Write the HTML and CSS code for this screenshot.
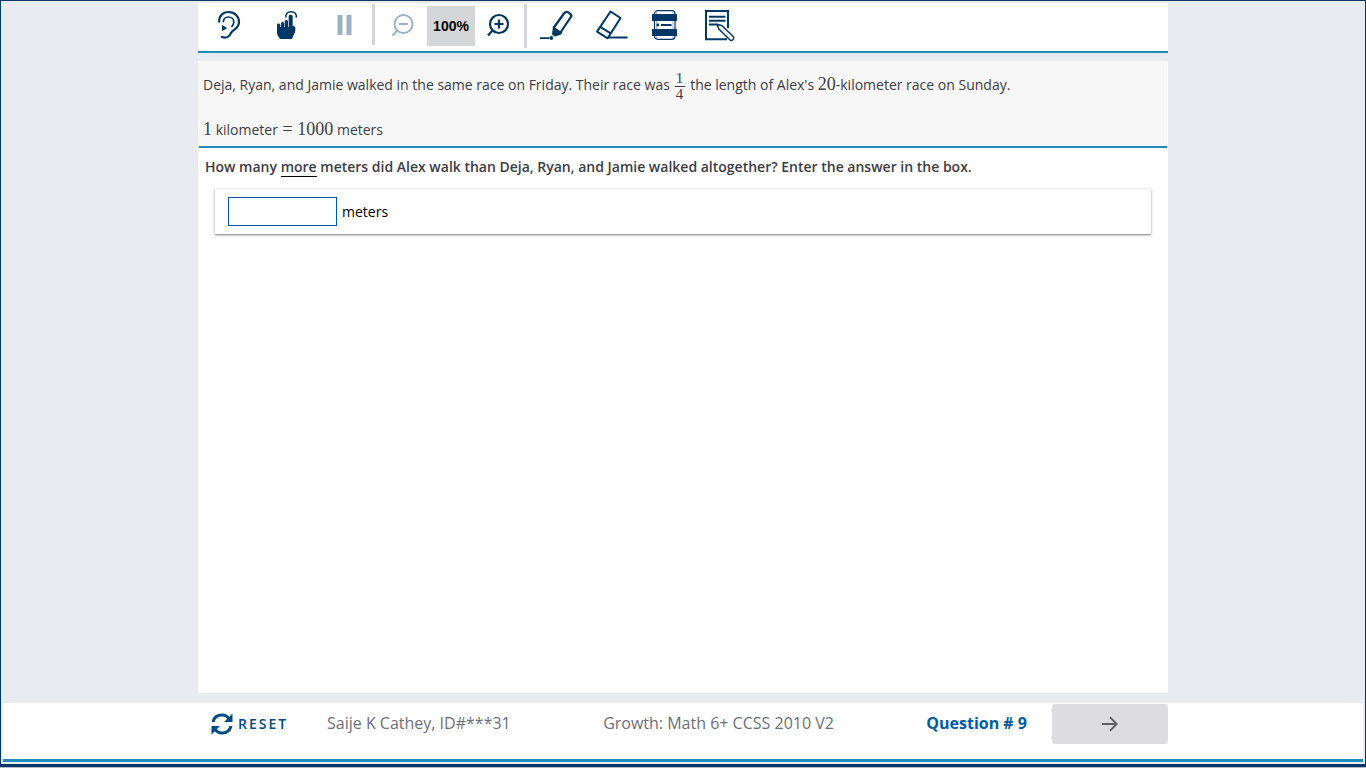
FILE: index.html
```
<!DOCTYPE html>
<html lang="en">
<head>
<meta charset="utf-8">
<title>Growth: Math 6+ CCSS 2010 V2</title>
<link rel="stylesheet" href="styles.css">
</head>
<body>
<div class="app">
  <header class="toolbar">
    <button class="tool" aria-label="Read aloud">
      <svg class="icon" viewBox="0 0 32 32"><g fill="none" stroke="currentColor" stroke-width="2.2"><path d="M6.2 13.5C5.600 7 10 3 15.600 3 21.800 3 26 7.500 26 13c0 7-5.500 6.500-8 11-2 4-4.500 5.800-10 3.800"/><path stroke-width="1.700" d="M10.300 13.300C10.300 10 12.500 8 15.300 8c3.200 0 5.500 2.300 5.500 5 0 2.500-1 3.500-2.300 5"/></g><path fill="currentColor" d="M9 16l5.200 3L9 22.300z"/></svg>
    </button>
    <button class="tool" aria-label="Touch">
      <svg class="icon" viewBox="0 0 32 32"><path fill="currentColor" d="M6 16c0-2 3.300-2 3.300 0v2h.7v-3.500c0-2 3.200-2 3.200 0V18h.6v-5.500c0-2 3.200-2 3.200 0V18h.7V7.500c0-2.400 4-2.400 4 0V17c1.600-.3 2.700.7 2.700 2 0 4-.7 5.500-2 7.500l-.7 2q-.3 1.500-1.500 1.500H9.500q-1 0-1.300-1.500C6.500 26.500 6 25.500 6 23.500z"/><path fill="none" stroke="currentColor" stroke-width="1.500" d="M15 8.500C14.300 5 16.500 2.700 20 2.700s6 2.300 5.300 6"/></svg>
    </button>
    <button class="tool pause" aria-label="Pause" disabled>
      <svg class="icon" viewBox="0 0 32 32"><path fill="currentColor" d="M9.500 6h5v20h-5zM18.500 6h5v20h-5z"/></svg>
    </button>
    <span class="divider"></span>
    <button class="tool zoom-out" aria-label="Zoom out" disabled>
      <svg class="icon" viewBox="0 0 32 32"><g fill="none" stroke="currentColor" stroke-width="2"><circle cx="18.500" cy="15" r="9"/><path d="M14 15h9M12 21.500L7.500 26.500"/></g></svg>
    </button>
    <output class="zoom-level">100%</output>
    <button class="tool zoom-in" aria-label="Zoom in">
      <svg class="icon" viewBox="0 0 32 32"><g fill="none" stroke="currentColor" stroke-width="2.200"><circle cx="16" cy="15" r="9"/><path d="M11.500 15h9M16 10.500v9M9.500 21.500L5 26.500"/></g></svg>
    </button>
    <span class="divider tall"></span>
    <div class="annotate">
      <button class="tool" aria-label="Highlighter">
        <svg class="icon" viewBox="0 0 32 32"><path fill="none" stroke="currentColor" stroke-width="2.200" d="M13.500 19L24 4.500Q26 2 28.300 3.300L30.300 4.800Q32 6.200 30.800 8L20.500 23.500"/><path fill="currentColor" d="M13 17L22.500 23.700 20.500 25.700 15 27.500 12 25.500zM0 28.200h9.200v1.800H0z"/><circle cx="11.300" cy="29" r="1.900" fill="currentColor"/></svg>
      </button>
      <button class="tool" aria-label="Eraser">
        <svg class="icon" viewBox="0 0 32 32"><path fill="none" stroke="currentColor" stroke-width="2" stroke-linejoin="round" d="M16.500 2.500L26.500 9 13.700 29.300 3 22.600zM6.200 17.800L16.800 24.300M14 28.500H33.500"/></svg>
      </button>
      <button class="tool" aria-label="Line reader">
        <svg class="icon" viewBox="0 0 32 32"><rect x="6.500" y="1.700" width="20.500" height="28.600" rx="3" fill="none" stroke="currentColor" stroke-width="1.200"/><path fill="none" stroke="currentColor" stroke-opacity=".35" d="M8.500 3v26M25 3v26"/><rect x="4" y="5" width="25" height="7" rx=".6" fill="currentColor"/><rect x="4" y="20" width="25" height="7" rx=".6" fill="currentColor"/><circle cx="9.800" cy="16" r="1.400" fill="currentColor"/><path stroke="currentColor" stroke-width="2" d="M13 16h10.500"/></svg>
      </button>
      <button class="tool" aria-label="Notepad">
        <svg class="icon" viewBox="0 0 32 32"><g fill="none" stroke="currentColor"><path stroke-width="2" d="M26 19V2H4v28.300h21"/><path stroke-width="1.900" d="M7 7.700h16.500M7 11.700h16.500M7 15.500h8"/><path fill="#fff" stroke-width="1.500" stroke-linejoin="round" d="M15 15.200L20 16.800 31.500 27.700Q32.500 29.300 31 30.600 29.500 32 28 31L16.800 20z"/></g></svg>
      </button>
    </div>
  </header>

  <main class="item">
    <section class="stimulus">
      <p>Deja, Ryan, and Jamie walked in the same race on Friday. Their race was <span class="fraction"><span>1</span><span class="denominator">4</span></span> the length of Alex's <span class="math">20</span>-kilometer race on Sunday.</p>
      <p><span class="math">1</span> kilometer <span class="math equals">=</span> <span class="math">1000</span> meters</p>
    </section>
    <label class="question" for="answer">How many <span class="stress">more</span> meters did Alex walk than Deja, Ryan, and Jamie walked altogether? Enter the answer in the box.</label>
    <div class="response">
      <input class="answer" id="answer" type="text">
      <span>meters</span>
    </div>
  </main>

  <footer class="footer">
    <div class="footer-inner">
      <button class="reset">
        <svg class="reset-icon" viewBox="0 0 22 22"><g fill="none" stroke="currentColor" stroke-width="3"><path d="M2 9C3 4.500 6.500 2 11 2c3 0 5.500 1.500 7 4"/><path d="M20 13c-1 4.500-4.500 7-9 7-3 0-5.500-1.500-7-4"/></g><path fill="currentColor" d="M21.500.5V9H13zM.5 21.500V13H9z"/></svg>
        <span>RESET</span>
      </button>
      <span class="student">Saije K Cathey, ID#***31</span>
      <span class="test">Growth: Math 6+ CCSS 2010 V2</span>
      <strong class="number">Question # 9</strong>
      <button class="next" aria-label="Next question">
        <svg class="arrow" viewBox="0 0 20 20"><path fill="none" stroke="currentColor" stroke-width="2" d="M1 10h16.500M10 2.500l7.500 7.500-7.500 7.500"/></svg>
      </button>
    </div>
  </footer>
</div>
</body>
</html>
```
FILE: styles.css
```
* {
  box-sizing: border-box;
}

body {
  margin: 0;
  background: #b5bcc6;
  font-family: "Open Sans", "Noto Sans", sans-serif;
  font-size: 14px;
  color: #3c3c43;
}

button {
  border: 0;
  padding: 0;
  background: none;
  font: inherit;
  color: #003767;
}

.app {
  display: flex;
  flex-direction: column;
  min-height: calc(100vh - 1px);
  padding: 2px;
  border: 1px solid #003767;
  border-bottom-width: 3px;
  background: #e8ebf0;
}

.toolbar,
.item,
.footer-inner {
  width: calc(100% - 390px);
  margin: 0 auto;
}

.toolbar {
  display: flex;
  align-items: center;
  height: 50px;
  padding: 0 2px 4px;
  border-bottom: 2px solid #1f8dbb;
  background: #fff;
}

.tool {
  display: flex;
  align-items: center;
  justify-content: center;
  width: 58px;
  height: 44px;
}

.tool:disabled {
  color: #9bb1c8;
}

.icon {
  width: 32px;
  height: 32px;
  overflow: visible;
}

.pause {
  width: 56px;
}

.zoom-out {
  width: 52px;
}

.zoom-in {
  width: 48px;
}

.divider {
  align-self: flex-start;
  width: 3px;
  height: 41px;
  margin-top: 1px;
  background: #d5d6d8;
}

.tall {
  height: 44px;
  margin-left: 1px;
}

.zoom-level {
  width: 48px;
  height: 40px;
  margin-top: 2px;
  background: #d5d6d8;
  color: #000;
  font: bold 14px/40px "Liberation Sans", Arial, sans-serif;
  text-align: center;
}

.annotate {
  display: flex;
  padding-left: 2px;
}

.annotate .tool {
  width: 54px;
}

.item {
  flex: 1;
  margin-top: 8px;
  margin-bottom: 10px;
  padding: 1px;
  background: #fff;
}

.stimulus {
  display: grid;
  gap: 18px;
  padding: 9px 4px 6px;
  border-bottom: 2px solid #1f8dbb;
  background: #f7f7f7;
}

.stimulus p {
  margin: 0;
  line-height: 20px;
}

.math,
.fraction {
  font-family: "Liberation Serif", serif;
}

.math {
  font-size: 18px;
  line-height: 18px;
}

.equals {
  margin: 0 1px;
}

.fraction {
  display: inline-grid;
  width: 10px;
  margin: 0 2px 0 1px;
  vertical-align: middle;
  font-size: 15px;
  line-height: 15px;
  text-align: center;
}

.denominator {
  border-top: 1px solid #3c3c43;
}

.question {
  display: block;
  padding: 9px 6px;
  font-weight: 600;
  line-height: 20px;
}

.stress {
  padding-bottom: 0;
  border-bottom: 1px solid #000;
}

.response {
  display: flex;
  align-items: center;
  gap: 5px;
  margin: 3px 16px 0;
  padding: 8px 13px;
  box-shadow: 0 1px 3px #00000055, 0 1px 1px #00000033;
  color: #000;
}

.answer {
  width: 109px;
  height: 29px;
  padding: 0 6px;
  border: 1px solid #0059a3;
  background: #fff;
  font: inherit;
}

.footer {
  height: 59px;
  border-bottom: 3px solid #1f8dbb;
  background: #fff;
  color: #6d6f78;
  font-size: 16px;
}

.footer-inner {
  display: flex;
  align-items: center;
  height: 42px;
}

.footer-inner span,
.number {
  padding-bottom: 2px;
}

.reset {
  display: flex;
  align-items: center;
  gap: 5px;
  width: 129px;
  padding-left: 13px;
  color: #004b87;
  font-size: 14px;
  font-weight: 600;
  letter-spacing: 2px;
}

.reset-icon {
  width: 22px;
  height: 22px;
}

.test {
  margin: 0 auto;
}

.number {
  margin-right: 25px;
  color: #005ba8;
}

.next {
  display: flex;
  align-items: center;
  justify-content: center;
  width: 116px;
  height: 40px;
  border-radius: 4px;
  background: #dddddf;
  color: #606060;
}

.arrow {
  width: 18px;
  height: 18px;
}
```
